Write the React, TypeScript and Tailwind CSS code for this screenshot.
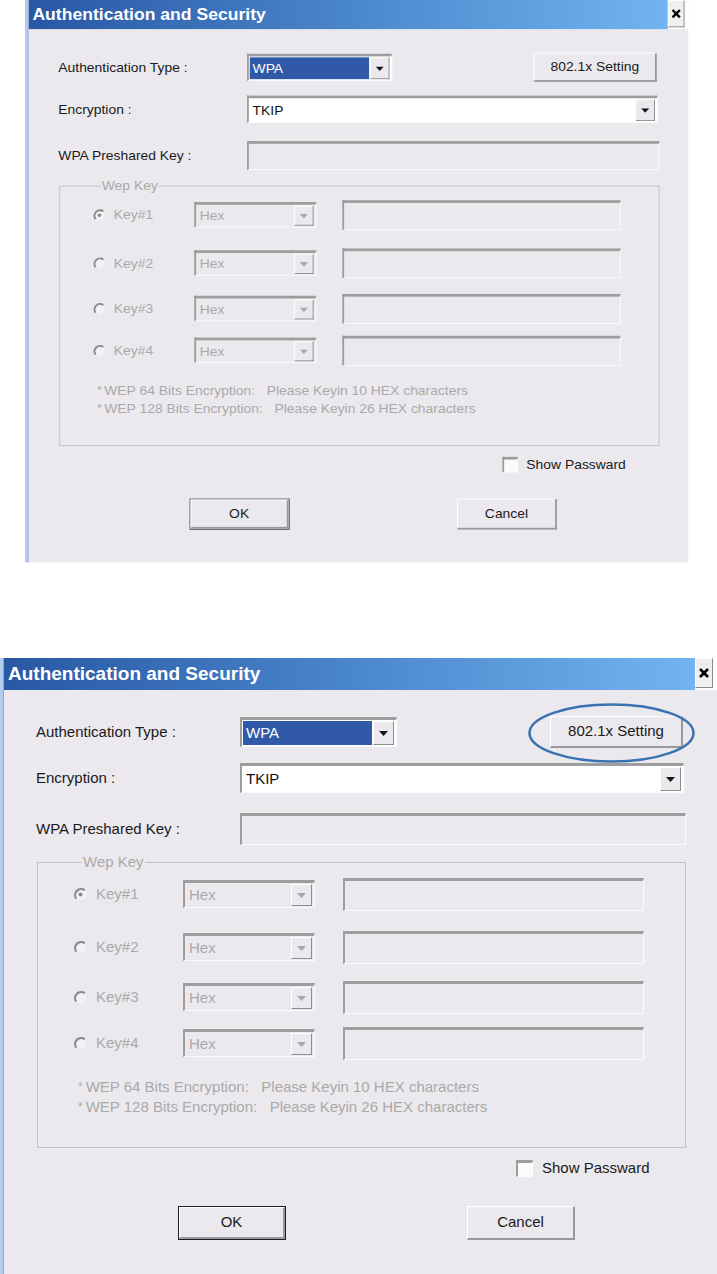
import React from "react";

const sunken =
  "border-t-[3px] border-l-2 border-r border-b border-t-[#9d9d9d] border-l-[#9d9d9d] border-r-[#fbfbfb] border-b-[#fbfbfb]";
const raised =
  "bg-[#ebe9ed] border-t border-l border-r-2 border-b-2 border-t-white border-l-white border-r-[#9a989d] border-b-[#9a989d]";

function Arrow({ dim }: { dim?: boolean }) {
  return (
    <svg width="9" height="5" viewBox="0 0 9 5">
      <path d="M0 0h9L4.5 5z" fill={dim ? "#a8a8a8" : "#151515"} />
    </svg>
  );
}

function Combo({
  value,
  className,
  highlighted,
  disabled,
}: {
  value: string;
  className: string;
  highlighted?: boolean;
  disabled?: boolean;
}) {
  return (
    <div className={`flex ${sunken} ${disabled ? "bg-[#ebe9ed]" : "bg-white"} ${className}`}>
      <div
        className={`flex-1 flex items-center px-[3px] m-[1px] ${
          highlighted ? "bg-[#3059a7] text-white" : disabled ? "text-[#a9a9a9]" : "text-[#111]"
        }`}
      >
        {value}
      </div>
      <div className="w-[21px] my-[1px] mr-[2px] flex items-center justify-center bg-[#ebe9ed] border border-t-white border-l-white border-r-[#8c8c8c] border-b-[#8c8c8c]">
        <Arrow dim={disabled} />
      </div>
    </div>
  );
}

function Radio({ checked }: { checked?: boolean }) {
  return (
    <svg width="15" height="15" viewBox="0 0 15 15">
      <circle cx="7.5" cy="7.5" r="6" fill="#f2f1f3" />
      <path d="M11.7 3.3A6 6 0 0 0 3.3 11.7" stroke="#8a8a8a" strokeWidth="2.2" fill="none" />
      {checked && <circle cx="7.5" cy="7.5" r="2" fill="#8a8a8a" />}
    </svg>
  );
}

const keys = [
  { label: "Key#1", gap: "" },
  { label: "Key#2", gap: "mt-[19px]" },
  { label: "Key#3", gap: "mt-[16px]" },
  { label: "Key#4", gap: "mt-[12px]" },
];

function Dialog({ ring }: { ring?: boolean }) {
  return (
    <div className="flex w-[717px] h-[618px] bg-white font-['Liberation_Sans',Arial,sans-serif]">
      <div className="w-[4px] bg-[#b3cbef] border-r border-[#86a9dc]" />
      <div className="flex-1 flex flex-col bg-[#ebe9ed]">
        {/* title bar */}
        <div className="flex h-[32px] bg-white">
          <div className="flex-1 flex items-center pl-[4px] bg-gradient-to-r from-[#2957a4] via-[#4a86cc] to-[#72b4ef] text-white font-bold text-[19px]">
            Authentication and Security
          </div>
          <div className="w-[18px] h-[30px] flex items-center justify-center bg-[#efefef] border border-t-white border-l-white border-r-[#8a8a8a] border-b-[#8a8a8a]">
            <svg width="10" height="10" viewBox="0 0 10 10">
              <path d="M1 1L9 9M9 1L1 9" stroke="#000" strokeWidth="2.6" />
            </svg>
          </div>
          <div className="w-[4px]" />
        </div>

        <div className="flex-1 flex flex-col pl-[32px] pr-[31px] pt-[26px] text-[15px] text-[#1a1a1a]">
          <div className="flex items-center h-[32px]">
            <div className="w-[204px]">Authentication Type :</div>
            <Combo value="WPA" highlighted className="w-[157px] h-[30px]" />
            <div className="relative ml-auto mr-[3px]">
              <button className={`w-[133px] h-[32px] ${raised} text-[15px] text-[#1a1a1a]`}>802.1x Setting</button>
              {ring && (
                <svg
                  className="absolute -left-[22px] -top-[13px] w-[167px] h-[60px] pointer-events-none"
                  viewBox="0 0 167 60"
                >
                  <ellipse cx="83.5" cy="30" rx="82" ry="28.5" fill="none" stroke="#3a72b1" strokeWidth="2.5" />
                </svg>
              )}
            </div>
          </div>

          <div className="flex items-center h-[30px] mt-[15px]">
            <div className="w-[204px]">Encryption :</div>
            <Combo value="TKIP" className="flex-1 h-[30px] mr-[2px]" />
          </div>

          <div className="flex items-center h-[32px] mt-[20px]">
            <div className="w-[204px]">WPA Preshared Key :</div>
            <div className={`flex-1 h-[32px] ${sunken} bg-[#ebe9ed]`} />
          </div>

          <fieldset className="mt-[8px] ml-[1px] border border-[#c2c0c6] pl-[35px] pt-[6px] pb-[30px]">
            <legend className="ml-[9px] px-[1px] leading-[18px] text-[#a9a9a9]">Wep Key</legend>
            <div className="flex flex-col">
              {keys.map((k, i) => (
                <div key={k.label} className={`flex items-center h-[34px] ${k.gap}`}>
                  <div className="w-[110px] flex items-center text-[#a9a9a9]">
                    <Radio checked={i === 0} />
                    <span className="ml-[8px]">{k.label}</span>
                  </div>
                  <Combo value="Hex" disabled className="w-[132px] h-[28px]" />
                  <div className={`ml-[28px] w-[301px] h-[33px] ${sunken} bg-[#ebe9ed]`} />
                </div>
              ))}
            </div>
            <div className="mt-[17px] ml-[5px] leading-[20px] text-[#a9a9a9] whitespace-pre">
              <div>
                <span className="mr-[3px] text-[12px] align-top">*</span>WEP 64 Bits Encryption:   Please Keyin 10 HEX characters
              </div>
              <div>
                <span className="mr-[3px] text-[12px] align-top">*</span>WEP 128 Bits Encryption:   Please Keyin 26 HEX characters
              </div>
            </div>
          </fieldset>

          <div className="flex items-center h-[17px] mt-[12px] ml-[480px]">
            <div className={`w-[17px] h-[17px] ${sunken} border-t-2 bg-[#fbfbfb]`} />
            <span className="ml-[9px]">Show Passward</span>
          </div>

          <div className="flex mt-[29px] ml-[142px]">
            <button className="w-[108px] h-[34px] border border-[#1e1e1e] p-0">
              <div className={`w-full h-full flex items-center justify-center ${raised}`}>OK</div>
            </button>
            <button className={`ml-[181px] w-[108px] h-[34px] flex items-center justify-center ${raised}`}>
              Cancel
            </button>
          </div>
        </div>
      </div>
    </div>
  );
}

export default function App() {
  return (
    <div className="w-full h-[1274px] overflow-hidden bg-white">
      <div className="h-[563px] pl-[25px] overflow-hidden">
        <div className="origin-top-left scale-x-[0.925] scale-y-[0.91]">
          <Dialog />
        </div>
      </div>
      <div className="mt-[95px]">
        <Dialog ring />
      </div>
    </div>
  );
}
